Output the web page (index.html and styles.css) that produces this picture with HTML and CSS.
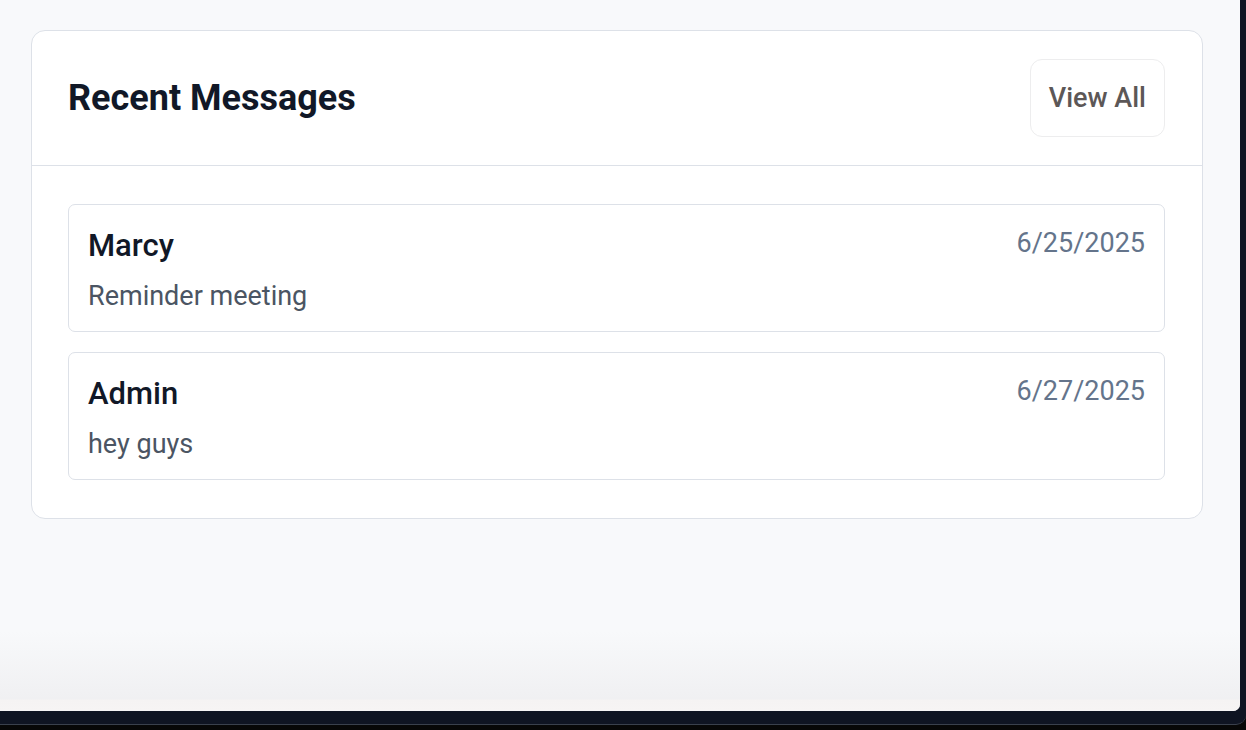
FILE: index.html
```html
<!DOCTYPE html>
<html lang="en">
<head>
<meta charset="utf-8">
<title>Recent Messages</title>
<link rel="stylesheet" href="styles.css">
</head>
<body>
<div class="device">
  <div class="screen">
    <section class="card">
      <header class="card-header">
        <h2 class="card-title">Recent Messages</h2>
        <button class="btn-view">View All</button>
      </header>
      <div class="card-body">
        <article class="msg">
          <div class="msg-top">
            <span class="msg-name">Marcy</span>
            <span class="msg-date">6/25/2025</span>
          </div>
          <p class="msg-text">Reminder meeting</p>
        </article>
        <article class="msg">
          <div class="msg-top">
            <span class="msg-name">Admin</span>
            <span class="msg-date">6/27/2025</span>
          </div>
          <p class="msg-text">hey guys</p>
        </article>
      </div>
    </section>
  </div>
</div>
</body>
</html>
```

FILE: styles.css
```css
* { box-sizing: border-box; }

html, body {
  margin: 0;
  padding: 0;
  background: #070707;
  font-family: Roboto, "Liberation Sans", Arial, sans-serif;
}

.device {
  width: 1246px;
  height: 725px;
  background: #0f1422;
  border-bottom: 1px solid #3a404c;
  border-bottom-right-radius: 10px;
}

.screen {
  position: relative;
  width: 1240px;
  height: 711px;
  background: #f8f9fb;
  border-bottom-right-radius: 7px;
  padding: 30px 0 0 31px;
  overflow: hidden;
}

.screen::after {
  content: "";
  position: absolute;
  left: 0;
  right: 0;
  bottom: 0;
  height: 80px;
  background: linear-gradient(to bottom, rgba(240,240,242,0) 0, #f0f0f2 68px, #f5f3f3 69px, #f6f4f4 80px);
  pointer-events: none;
}

.card {
  width: 1172px;
  background: #ffffff;
  border: 1px solid #dde1e8;
  border-radius: 14px;
}

.card-header {
  display: flex;
  align-items: center;
  justify-content: space-between;
  padding: 28px 37px 28px 36px;
  border-bottom: 1px solid #dde1e8;
}

.card-title {
  margin: 0;
  font-size: 36px;
  font-weight: 700;
  color: #111827;
  line-height: 40px;
}

.btn-view {
  height: 78px;
  padding: 0 18px;
  background: #ffffff;
  border: 1px solid #ededee;
  border-radius: 12px;
  font-family: Roboto, "Liberation Sans", Arial, sans-serif;
  font-size: 27px;
  font-weight: 500;
  color: #5c5757;
}

.card-body {
  display: flex;
  flex-direction: column;
  gap: 20px;
  padding: 38px 37px 38px 36px;
}

.msg {
  border: 1px solid #dde1e8;
  border-radius: 7px;
  padding: 20px 19px 17px 19px;
}

.msg-top {
  display: flex;
  justify-content: space-between;
  align-items: flex-start;
}

.msg-name {
  font-size: 31px;
  font-weight: 500;
  color: #111827;
  line-height: 42px;
}

.msg-date {
  font-size: 27px;
  color: #64748b;
  line-height: 36px;
}

.msg-text {
  margin: 11px 0 0;
  font-size: 27px;
  color: #4b5563;
  line-height: 36px;
}
```
